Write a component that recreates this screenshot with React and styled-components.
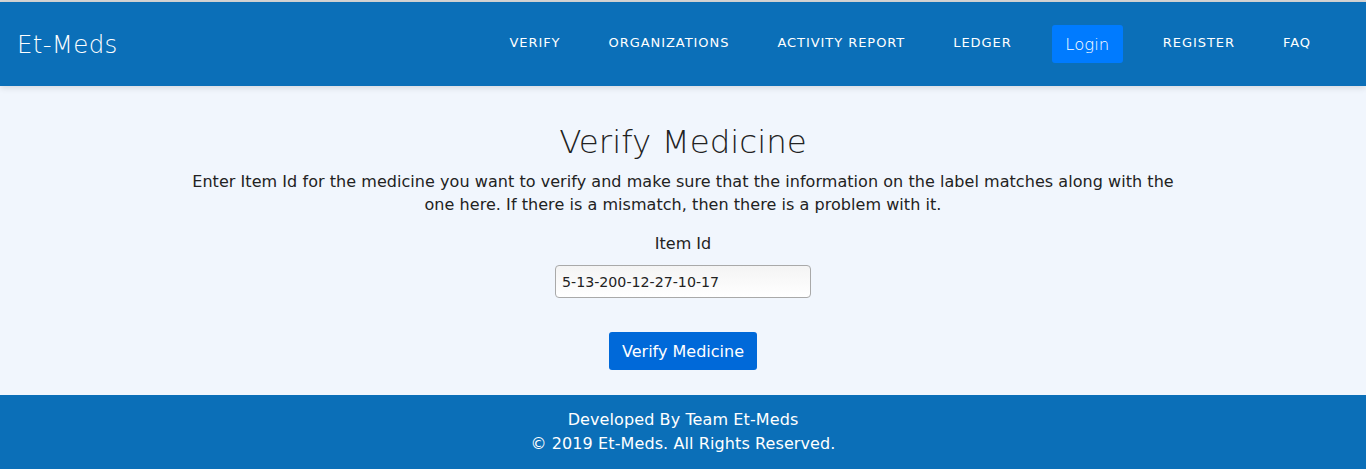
import styled, { createGlobalStyle } from 'styled-components'

const GlobalStyle = createGlobalStyle`
    html, body {
        margin: 0;
        padding: 0;
        background: #f1f6fd;
        font-family: "DejaVu Sans", "Open Sans", sans-serif;
        color: #222;
    }
`

const links = ['Verify', 'Organizations', 'Activity Report', 'Ledger', 'Login', 'Register', 'FAQ']

const App = () => {
    return (
        <>
        <GlobalStyle />
        <Page>
            <NavBar>
                <Brand>Et-Meds</Brand>
                <NavLinks>
                    {links.map((l) => (
                        l === 'Login'
                            ? <LoginButton key={l} href="#">{l}</LoginButton>
                            : <NavLink key={l} href="#">{l}</NavLink>
                    ))}
                </NavLinks>
            </NavBar>
            <Main>
                <Title>Verify Medicine</Title>
                <Lead>
                    Enter Item Id for the medicine you want to verify and make sure that the information on the label matches along with the one here. If there is a mismatch, then there is a problem with it.
                </Lead>
                <Field>
                    <Label htmlFor="itemId">Item Id</Label>
                    <Input id="itemId" defaultValue="5-13-200-12-27-10-17" />
                </Field>
                <SubmitButton>Verify Medicine</SubmitButton>
            </Main>
            <Footer>
                <div>Developed By Team Et-Meds</div>
                <div>© 2019 Et-Meds. All Rights Reserved.</div>
            </Footer>
        </Page>
        </>
    )
}

export default App

const Page = styled.div`
    display: flex;
    flex-direction: column;
    min-height: 469px;
    border-top: 2px solid #d6d6d6;
    box-sizing: border-box;
`

const NavBar = styled.nav`
    height: 84px;
    background: #0b6fb8;
    display: flex;
    align-items: center;
    justify-content: space-between;
    padding: 0 47px 0 17px;
    box-shadow: 0 2px 6px rgba(0, 0, 0, 0.12);
    position: relative;
    z-index: 1;
`

const Brand = styled.div`
    color: #fff;
    font-size: 24.5px;
    font-weight: 300;
    letter-spacing: 0.3px;
`

const NavLinks = styled.div`
    display: flex;
    align-items: center;
    gap: 32px;
`

const NavLink = styled.a`
    color: #fff;
    text-decoration: none;
    text-transform: uppercase;
    font-size: 13px;
    letter-spacing: 0.95px;
    padding: 0 8px 3px;
`

const LoginButton = styled.a`
    color: #fff;
    text-decoration: none;
    background: #007bff;
    border-radius: 3px;
    font-size: 16.5px;
    font-weight: 300;
    width: 71px;
    height: 38px;
    display: flex;
    align-items: center;
    justify-content: center;
`

const Main = styled.main`
    flex: 1;
    display: flex;
    flex-direction: column;
    align-items: center;
    padding-top: 36px;
    padding-bottom: 25px;
`

const Title = styled.h1`
    margin: 0;
    font-size: 32.5px;
    line-height: 40px;
    font-weight: 300;
    color: #222;
`

const Lead = styled.p`
    margin: 8px 0 0;
    max-width: 1000px;
    text-align: center;
    font-size: 16px;
    letter-spacing: 0.05px;
    line-height: 23px;
    color: #222;
`

const Field = styled.div`
    display: flex;
    flex-direction: column;
    align-items: center;
    margin-top: 16px;
`

const Label = styled.label`
    font-size: 16px;
    line-height: 24px;
    margin-bottom: 9px;
`

const Input = styled.input`
    width: 256px;
    height: 33px;
    box-sizing: border-box;
    border: 1px solid #a9a9a9;
    border-radius: 4px;
    background: linear-gradient(#f4f4f4, #ffffff);
    padding: 0 6px;
    font-family: inherit;
    font-size: 14.2px;
    color: #222;
`

const SubmitButton = styled.button`
    margin-top: 34px;
    width: 148px;
    height: 38px;
    border: none;
    border-radius: 3px;
    background: #0069d9;
    color: #fff;
    font-family: inherit;
    font-size: 16px;
    font-weight: 400;
`

const Footer = styled.footer`
    background: #0b6fb8;
    color: #fff;
    text-align: center;
    font-size: 16px;
    letter-spacing: 0.1px;
    line-height: 24px;
    padding: 13px 0;
`
